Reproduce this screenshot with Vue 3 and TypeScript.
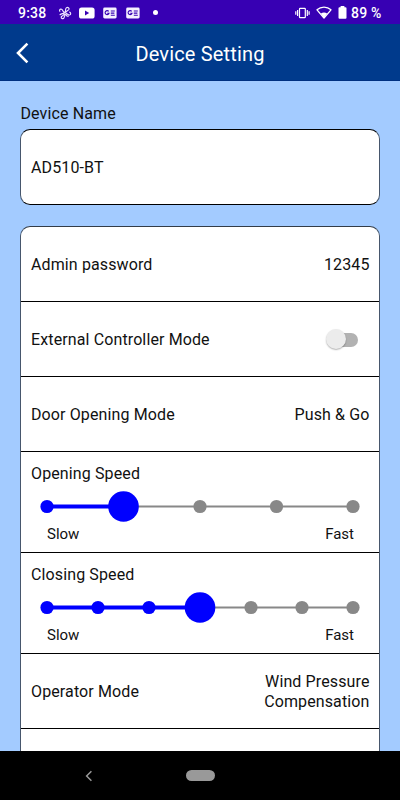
<script setup lang="ts">
import { ref } from 'vue'

interface SpeedSetting {
  label: string
  steps: number
  value: number
}

const deviceName = ref<string>('AD510-BT')
const adminPassword = ref<string>('12345')
const externalMode = ref<boolean>(false)
const speeds = ref<SpeedSetting[]>([
  { label: 'Opening Speed', steps: 5, value: 1 },
  { label: 'Closing Speed', steps: 7, value: 3 },
])

const TRACK_START = 16
const TRACK_LENGTH = 306

function stepX(speed: SpeedSetting, index: number): number {
  return TRACK_START + (TRACK_LENGTH * index) / (speed.steps - 1)
}
</script>

<template>
  <div class="screen">
    <div class="status">
      <span class="clock">9:38</span>
      <svg class="i-fan" width="14" height="14" viewBox="0 0 14 14" fill="none" stroke="#eee6ff" stroke-width="1.15">
        <path d="M6.6 6.4C4.2 5.8 5.4 4 3.6 3.2 1.8 2.6.8 4.6 2.2 5.6M7.2 6.3C8.2 4.3 6.8 3.4 8.3 1.9 9.8.7 11.6 2 10.9 3.5 10.2 4.7 8.8 4.2 8.4 6M6 7.4C4.2 7 3.2 8.2 1.6 8.8M6.1 8.2C5.8 10 3.7 9.4 3.2 11 3 12.8 5.4 13.2 6 11.7 6.4 10.5 6.8 9.6 7.3 8.3M8 7.6C9.4 7.2 9.9 9.3 11.6 9 13.3 8.3 12.9 6.1 11.2 6.2M8 8.6C8.4 10 9.7 10.4 10.6 10.4" />
        <circle cx="7.1" cy="7.3" r="1.1" />
      </svg>
      <svg class="i-tube" width="16" height="12" viewBox="0 0 16 12">
        <rect x="0" y="0.5" width="15.6" height="11" rx="2.6" fill="#fff" />
        <path d="M6 3.6v4.8L10.2 6z" fill="#3700b3" />
      </svg>
      <svg v-for="n in 2" :key="n" class="i-news" width="14" height="12" viewBox="0 0 14 12">
        <rect x="0.2" y="0.6" width="13.4" height="10.8" rx="1.4" fill="#f5f0ff" />
        <path d="M5.7 4.4A2 2 0 1 0 6 6.3H4.2M7.8 4h4M7.8 6.1h3.6M7.8 8.2h4" fill="none" stroke="#3700b3" stroke-width="1.1" />
      </svg>
      <i class="dot"></i>
      <span class="grow"></span>
      <svg class="i-vibe" width="15" height="12" viewBox="0 0 15 12" fill="none" stroke="#fff" stroke-width="1.2">
        <rect x="4.5" y="1.3" width="5.8" height="9.4" rx="0.6" />
        <path d="M2.6 3v6M.8 4.2v3.6M12.3 3v6M14.1 4.2v3.6" />
      </svg>
      <svg class="i-wifi" width="16" height="13" viewBox="0 0 16 13">
        <path d="M1 3.8C5 .2 11 .2 15 3.8L8 12z" fill="none" stroke="#fff" stroke-width="1.3" stroke-linejoin="round" />
        <path d="M4.9 7.6c1.8-1.5 4.4-1.5 6.2 0L8 12z" fill="#fff" />
      </svg>
      <svg class="i-batt" width="9" height="13" viewBox="0 0 9 13">
        <path d="M2.6 0h3.8v1.3h1.1q1 0 1 1v9.5q0 1-1 1h-6q-1 0-1-1V2.3q0-1 1-1h1.1z" fill="#fff" />
      </svg>
      <span class="percent">89 %</span>
    </div>

    <header class="header">
      <svg class="back" width="14" height="22" viewBox="0 0 14 22" fill="none" stroke="#fff" stroke-width="2.6">
        <path d="M11.4 1.6 2 11l9.4 9.4" />
      </svg>
      <h1>Device Setting</h1>
    </header>

    <main class="content">
      <div class="section-label">Device Name</div>
      <div class="card name-card">{{ deviceName }}</div>

      <div class="card settings">
        <div class="row">
          <span>Admin password</span>
          <span>{{ adminPassword }}</span>
        </div>
        <div class="row">
          <span>External Controller Mode</span>
          <button class="switch" :class="{ on: externalMode }" aria-label="External Controller Mode" @click="externalMode = !externalMode">
            <i class="knob"></i>
          </button>
        </div>
        <div class="row">
          <span>Door Opening Mode</span>
          <span class="push">Push &amp; Go</span>
        </div>
        <div v-for="speed in speeds" :key="speed.label" class="speed">
          <div class="speed-label">{{ speed.label }}</div>
          <svg class="slider" width="338" height="32" viewBox="0 0 338 32">
            <line :x1="stepX(speed, speed.value)" y1="15.5" :x2="stepX(speed, speed.steps - 1)" y2="15.5" stroke="#888" stroke-width="2" />
            <line :x1="stepX(speed, 0)" y1="15.5" :x2="stepX(speed, speed.value)" y2="15.5" stroke="#00f" stroke-width="3.8" />
            <circle
              v-for="n in speed.steps"
              :key="n"
              :cx="stepX(speed, n - 1)"
              cy="15.5"
              :r="n - 1 === speed.value ? 15.3 : 6.6"
              :fill="n - 1 <= speed.value ? '#00f' : '#888'"
              @click="speed.value = n - 1"
            />
          </svg>
          <div class="ends"><span>Slow</span><span>Fast</span></div>
        </div>
        <div class="row">
          <span>Operator Mode</span>
          <span class="multi">Wind Pressure<br />Compensation</span>
        </div>
        <div class="row"></div>
      </div>
    </main>

    <nav class="navbar">
      <svg class="nav-back" width="8" height="12" viewBox="0 0 8 12" fill="none" stroke="#999" stroke-width="1.5">
        <path d="M6.4 1.2 1.6 6l4.8 4.8" />
      </svg>
      <i class="pill"></i>
    </nav>
  </div>
</template>

<style>
body {
  margin: 0;
}
</style>

<style scoped>
.screen {
  width: 400px;
  height: 800px;
  overflow: hidden;
  display: flex;
  flex-direction: column;
  background: #a3cbff;
  color: #111;
  font-family: Roboto, "Liberation Sans", sans-serif;
  font-size: 16px;
  font-weight: 400;
  letter-spacing: 0.12px;
  line-height: 20px;
}
.status {
  flex: none;
  height: 24px;
  background: #3700b3;
  color: #fff;
  display: flex;
  align-items: center;
  padding: 1px 18.5px 0 18px;
  box-sizing: border-box;
  font-size: 14px;
  font-weight: 500;
  letter-spacing: 0.2px;
}
.clock {
  width: 40px;
}
.i-tube {
  margin-left: 7px;
}
.i-news {
  margin-left: 8px;
}
.i-news + .i-news {
  margin-left: 9px;
}
.dot {
  width: 5px;
  height: 5px;
  border-radius: 50%;
  background: #fff;
  margin-left: 13px;
}
.grow {
  flex: 1;
}
.i-wifi {
  margin-left: 6px;
}
.i-batt {
  margin-left: 6px;
}
.percent {
  margin-left: 4px;
  white-space: nowrap;
}
.header {
  flex: none;
  height: 57px;
  box-sizing: border-box;
  background: #003a8c;
  border-bottom: 1px solid #003080;
  color: #fff;
  display: grid;
  grid-template-columns: 40px 1fr 40px;
  align-items: center;
  padding-top: 2px;
}
.back {
  margin-left: 16px;
}
.header h1 {
  margin: 0;
  font-size: 20px;
  line-height: 24px;
  padding-top: 1px;
  font-weight: 400;
  letter-spacing: 0.16px;
  text-align: center;
}
.content {
  flex: 1;
  min-height: 0;
  overflow: hidden;
  padding: 22px 20px 0;
}
.section-label {
  height: 26px;
  line-height: 21px;
  padding-left: 0.5px;
}
.card {
  background: #fff;
  border: 1px solid #000;
  border-left-color: #46566c;
  border-right-color: #46566c;
  border-radius: 10px;
  box-sizing: border-box;
}
.name-card {
  height: 76px;
  display: flex;
  align-items: center;
  padding: 1px 10px 0;
}
.settings {
  margin-top: 21px;
  border-bottom: 0;
  border-top-color: #333c48;
  border-radius: 10px 10px 0 0;
}
.row {
  height: 75px;
  box-sizing: border-box;
  border-bottom: 1px solid #000;
  padding: 1px 9.5px 0 10px;
  display: flex;
  align-items: center;
  justify-content: space-between;
}
.row:first-child {
  padding-top: 2px;
}
.multi {
  text-align: right;
  line-height: 19.5px;
}
.switch {
  width: 32px;
  height: 20px;
  padding: 3px 0;
  margin-right: 11.5px;
  border: 0;
  background: none;
  display: flex;
  align-items: center;
  position: relative;
}
.switch::before {
  content: "";
  width: 28px;
  height: 14px;
  border-radius: 7px;
  background: #b2b2b2;
  margin-left: 4px;
}
.knob {
  position: absolute;
  left: 0;
  top: -0.5px;
  width: 20px;
  height: 20px;
  border-radius: 50%;
  background: #ececec;
  box-shadow: 0 1px 1.5px rgba(0, 0, 0, 0.3);
}
.switch.on .knob {
  left: 12px;
}
.speed {
  height: 101px;
  box-sizing: border-box;
  border-bottom: 1px solid #000;
  padding: 12px 10px 0;
}
.slider {
  display: block;
  margin-top: 7px;
}
.ends {
  display: flex;
  justify-content: space-between;
  padding: 1px 15px 0 16px;
  font-size: 15px;
  letter-spacing: 0;
}
.navbar {
  flex: none;
  height: 49px;
  background: #000;
  display: flex;
  align-items: center;
}
.nav-back {
  margin-left: 85px;
}
.pill {
  width: 29px;
  height: 11px;
  border-radius: 6px;
  background: #999;
  margin-left: 93px;
}
</style>
